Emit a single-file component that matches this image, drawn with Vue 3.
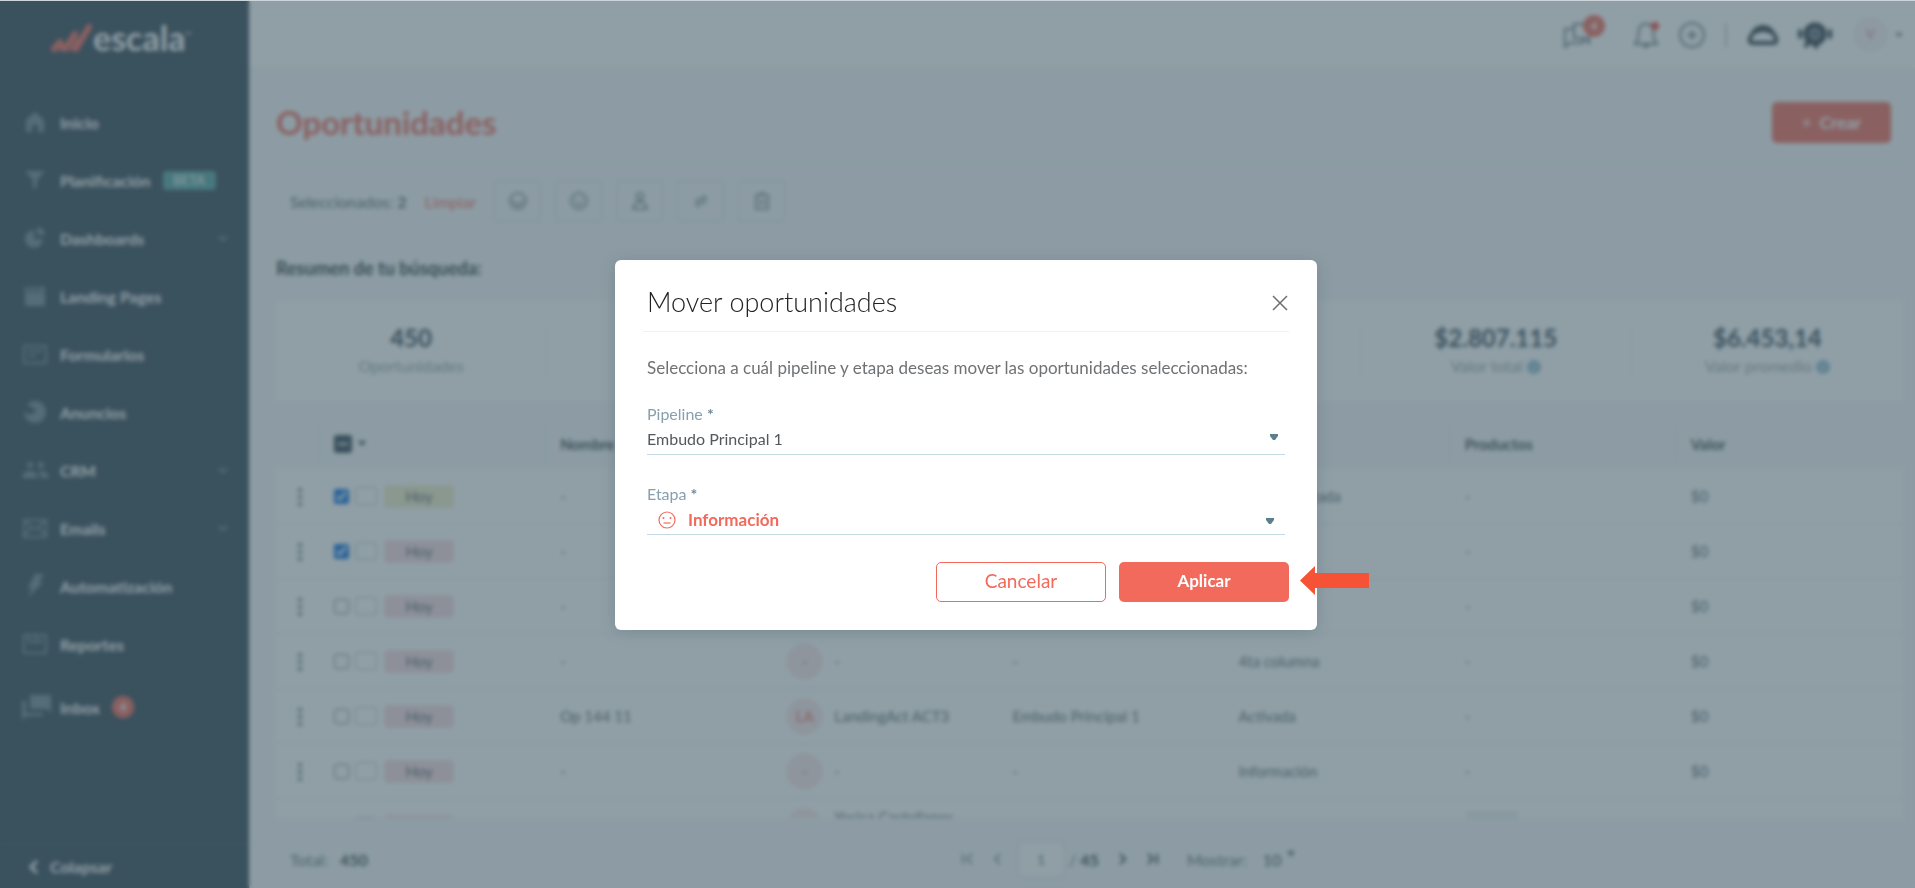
<template>
  <div class="app">
    <aside class="sidebar">
      <div class="logo">
        <svg class="logo-mark" width="42" height="30" viewBox="0 0 42 30" aria-hidden="true">
          <path d="M3 26 L9 19 M14 26 L24 11 M25 26 L38 4" stroke="#f26a5c" stroke-width="6" stroke-linecap="round" />
          <path d="M9 27 L12 22 M20 27 L27 16" stroke="#f26a5c" stroke-width="3" stroke-linecap="round" />
        </svg>
        <span class="logo-text">escala</span><span class="logo-tm">™</span>
      </div>

      <nav class="menu">
        <a v-for="item in menu" :key="item.label" href="#" class="menu-item" :class="{ 'menu-item-inbox': item.count }">
          <svg class="menu-icon" width="28" height="28" viewBox="0 0 28 28" aria-hidden="true">
            <path :d="item.icon" :class="item.solid ? 'solid' : 'line'" />
          </svg>
          <span>{{ item.label }}</span>
          <span v-if="item.beta" class="beta">BETA</span>
          <span v-if="item.count" class="count">{{ item.count }}</span>
          <svg v-if="item.children" class="chevron" width="12" height="8" viewBox="0 0 12 8" aria-hidden="true">
            <path d="M2 2 L6 6 L10 2" class="line" />
          </svg>
        </a>
      </nav>

      <button class="collapse">
        <svg width="12" height="16" viewBox="0 0 12 16" aria-hidden="true">
          <path d="M9 2 L3 8 L9 14" fill="none" stroke="currentColor" stroke-width="3" />
        </svg>
        Colapsar
      </button>
    </aside>

    <div class="main">
      <header class="topbar">
        <button class="icon-btn chat-btn" aria-label="Mensajes">
          <svg width="32" height="30" viewBox="0 0 32 30">
            <path d="M12 4 H27 V23 L23 18 H12 Z M12 9 H3 V27 L8 23 H21 V18" class="line" />
          </svg>
          <span class="count chat-count">4</span>
        </button>
        <button class="icon-btn bell-btn" aria-label="Notificaciones">
          <svg width="26" height="28" viewBox="0 0 26 28">
            <path d="M2 23 H24 L21 18 L20 8 C19 5 16 3 13 3 C10 3 7 5 6 8 L5 18 Z M10 24 Q13 28 16 24" class="line" />
            <circle cx="22" cy="5" r="4" fill="#f2453b" />
          </svg>
        </button>
        <button class="icon-btn" aria-label="Agregar">
          <svg width="26" height="26" viewBox="0 0 26 26">
            <circle cx="13" cy="13" r="12" class="line" />
            <path d="M13 8 V18 M8 13 H18" class="line" />
          </svg>
        </button>
        <span class="separator"></span>
        <button class="icon-btn academy-btn" aria-label="Academia">
          <svg width="32" height="24" viewBox="0 0 32 24">
            <path d="M6 20 C2 20 2 16 4 13 C6 11 7 4 16 4 C25 4 26 11 28 13 C30 16 30 20 26 20 Z" fill="none" stroke="#2b3a42" stroke-width="4" stroke-linejoin="round" />
            <path d="M7 10 Q16 5 25 10" fill="none" stroke="#2b3a42" stroke-width="3" />
          </svg>
        </button>
        <button class="icon-btn robot-btn" aria-label="Asistente">
          <svg width="36" height="28" viewBox="0 0 36 28">
            <circle cx="18" cy="13" r="9" fill="#7d8b92" stroke="#2b3a42" stroke-width="5" />
            <path d="M3 10 V16 M33 10 V16 M11 20 L9 25 M19 22 V26" fill="none" stroke="#2b3a42" stroke-width="4" stroke-linecap="round" />
            <rect x="14" y="11" width="8" height="4" rx="2" fill="#4d5d65" />
          </svg>
        </button>
        <button class="profile" aria-label="Perfil">
          <span class="profile-avatar">V</span>
          <svg width="8" height="6" viewBox="0 0 8 6"><path d="M0 1 H8 L4 5 Z" fill="#5d6e76" /></svg>
        </button>
      </header>

      <main class="content">
        <div class="page-head">
          <h1>Oportunidades</h1>
          <button class="create"><span class="plus">+</span> Crear</button>
        </div>

        <div class="toolbar">
          <span class="selected">Seleccionados: <b>{{ selectedCount }}</b></span>
          <a href="#" class="clear">Limpiar</a>
          <button v-for="action in actions" :key="action.label" class="action" :aria-label="action.label">
            <svg width="20" height="20" viewBox="0 0 20 20"><path :d="action.icon" class="line" /></svg>
          </button>
        </div>

        <h2>Resumen de tu búsqueda:</h2>
        <div class="stats">
          <div v-for="(stat, i) in stats" :key="i" class="stat">
            <strong>{{ stat.value }}</strong>
            <span>{{ stat.label }} <i v-if="stat.info" class="info">i</i></span>
          </div>
        </div>

        <div class="table-wrap">
          <table>
            <thead>
              <tr>
                <th class="col-dots"></th>
                <th>
                  <span class="check-all"><span class="check-mixed"></span><svg width="8" height="6" viewBox="0 0 8 6"><path d="M0 0 H8 L4 5 Z" fill="#2b3a42" /></svg></span>
                </th>
                <th>Nombre</th>
                <th>Contacto</th>
                <th>Pipeline</th>
                <th>Etapa</th>
                <th>Productos</th>
                <th>Valor</th>
              </tr>
            </thead>
            <tbody>
              <tr v-for="(row, i) in rows" :key="i">
                <td class="col-dots">
                  <svg width="6" height="20" viewBox="0 0 6 20"><path d="M1 1h4v4H1z M1 8h4v4H1z M1 15h4v4H1z" fill="#7d8b92" /></svg>
                </td>
                <td>
                  <div class="status">
                    <input type="checkbox" v-model="row.checked" :aria-label="'Seleccionar fila ' + (i + 1)">
                    <span class="note"></span>
                    <span class="tag" :class="row.tag">{{ row.date }}</span>
                  </div>
                </td>
                <td>{{ row.name }}</td>
                <td>
                  <div class="contact">
                    <span class="avatar">{{ row.initials }}</span>
                    <span class="contact-name" :class="{ tall: row.tall }">{{ row.contact }}</span>
                  </div>
                </td>
                <td>{{ row.pipeline }}</td>
                <td>{{ row.stage }}</td>
                <td><span v-if="row.tall" class="product"></span><template v-else>-</template></td>
                <td>{{ row.value }}</td>
              </tr>
            </tbody>
          </table>
        </div>

        <footer class="pager">
          <span class="total">Total: <b>450</b></span>
          <div class="pages">
            <button class="off" aria-label="Primera"><svg width="14" height="14" viewBox="0 0 14 14"><path d="M2 2 V12 M11 2 L6 7 L11 12" /></svg></button>
            <button class="off" aria-label="Anterior"><svg width="14" height="14" viewBox="0 0 14 14"><path d="M9 2 L4 7 L9 12" /></svg></button>
            <input type="text" v-model="page" aria-label="Página">
            <span class="of">/ <b>45</b></span>
            <button aria-label="Siguiente"><svg width="14" height="14" viewBox="0 0 14 14"><path d="M5 2 L10 7 L5 12" /></svg></button>
            <button aria-label="Última"><svg width="14" height="14" viewBox="0 0 14 14"><path d="M3 2 L8 7 L3 12 M12 2 V12" /></svg></button>
            <label for="mostrar">Mostrar:</label>
            <span class="size">
              <select id="mostrar" v-model="pageSize"><option>10</option><option>25</option></select>
              <svg width="8" height="8" viewBox="0 0 8 8"><path d="M0 1 H8 L4 7 Z" fill="#334654" /></svg>
            </span>
          </div>
        </footer>
      </main>
    </div>

    <div class="overlay">
      <section class="modal" role="dialog" aria-modal="true" aria-labelledby="modal-title">
        <header class="modal-head">
          <h2 id="modal-title">Mover oportunidades</h2>
          <button class="close" aria-label="Cerrar">
            <svg width="18" height="18" viewBox="0 0 18 18"><path d="M2 2 L16 16 M16 2 L2 16" fill="none" stroke="#6b6f73" stroke-width="1.5" /></svg>
          </button>
        </header>
        <div class="modal-body">
          <p>Selecciona a cuál pipeline y etapa deseas mover las oportunidades seleccionadas:</p>

          <div class="field">
            <label for="pipeline">Pipeline <b>*</b></label>
            <div class="select-box">
              <select id="pipeline" v-model="pipeline"><option>Embudo Principal 1</option></select>
              <svg class="arrow" width="8" height="6" viewBox="0 0 8 6"><path d="M0 0 H8 V2 L5 6 H3 L0 2 Z" fill="#5c7f90" /></svg>
            </div>
          </div>

          <div class="field field-stage">
            <label for="etapa">Etapa <b>*</b></label>
            <div class="select-box">
              <svg class="face" width="18" height="18" viewBox="0 0 18 18">
                <circle cx="9" cy="9" r="8" fill="none" stroke="#f26a5c" stroke-width="1.2" />
                <circle cx="5.5" cy="7" r="1" fill="#f26a5c" /><circle cx="12.5" cy="7" r="1" fill="#f26a5c" />
                <path d="M5.5 12 H12.5" stroke="#f26a5c" stroke-width="1.2" />
              </svg>
              <select id="etapa" v-model="stage"><option>Información</option></select>
              <svg class="arrow" width="8" height="6" viewBox="0 0 8 6"><path d="M0 0 H8 V2 L5 6 H3 L0 2 Z" fill="#5c7f90" /></svg>
            </div>
          </div>
        </div>
        <div class="modal-actions">
          <button class="btn btn-outline">Cancelar</button>
          <button class="btn btn-primary">Aplicar</button>
        </div>
        <svg class="pointer" width="69" height="29" viewBox="0 0 69 29" aria-hidden="true">
          <path d="M0 14.5 L15 0 V7 H69 V22 H15 V29 Z" fill="#f65236" />
        </svg>
      </section>
    </div>
  </div>
</template>

<script setup>
import { ref, computed } from 'vue';

const menu = [
  { label: 'Inicio', solid: true, icon: 'M14 4 L23 12 V24 H17 V17 H11 V24 H5 V12 Z' },
  { label: 'Planificación', beta: true, solid: true, icon: 'M4 5 H24 L16 14 V20 L12 24 V14 Z' },
  { label: 'Dashboards', children: true, solid: true, icon: 'M13 6 V15 H22 A9 9 0 1 1 13 6 Z M16 3 A8 8 0 0 1 24 11 H16 Z' },
  { label: 'Landing Pages', solid: true, icon: 'M4 5 H8 V9 H4 Z M10 5 H15 V9 H10 Z M17 5 H24 V9 H17 Z M4 10 H24 V24 H4 Z' },
  { label: 'Formularios', icon: 'M3 6 H25 V23 H3 Z M7 11 H21 M7 16 H15' },
  { label: 'Anuncios', solid: true, icon: 'M14 3 A11 11 0 1 1 3 14 L9 17 L16 12 L6 7 A11 11 0 0 1 14 3 Z' },
  { label: 'CRM', children: true, solid: true, icon: 'M9 6 A3 3 0 1 1 9 12 A3 3 0 1 1 9 6 Z M20 6 A3 3 0 1 1 20 12 A3 3 0 1 1 20 6 Z M1 22 Q2 15 9 15 Q16 15 17 22 Z M19 15 Q27 15 28 22 H20 Q20 18 17 16 Z' },
  { label: 'Emails', children: true, icon: 'M3 6 H25 V23 H3 Z M4 7 L14 16 L24 7 M3 22 L10 14 M25 22 L18 14' },
  { label: 'Automatización', solid: true, icon: 'M14 2 H23 L18 10 H22 L7 26 L11 16 H7 Z' },
  { label: 'Reportes', icon: 'M3 5 H25 V23 H3 Z M8 6 V12 H20 V8 M15 6 V12' },
  { label: 'Inbox', count: 4, solid: true, icon: 'M9 2 H30 V20 L26 16 H9 Z M1 8 H5 V20 H22 L22 23 H6 L1 27 Z' },
];

const actions = [
  { label: 'Cambiar estado', icon: 'M10 2 A8 8 0 1 1 10 18 A8 8 0 1 1 10 2 Z M4 11 H7 L8 14 H12 L13 11 H16' },
  { label: 'Mover etapa', icon: 'M10 2 A8 8 0 1 1 10 18 A8 8 0 1 1 10 2 Z M7 7 V9 M13 7 V9 M6 12 Q10 15 14 12' },
  { label: 'Asignar responsable', icon: 'M10 2 A3 3 0 1 1 10 9 A3 3 0 1 1 10 2 Z M3 18 Q4 13 10 10 Q16 13 17 18 Z' },
  { label: 'Transferir', icon: 'M5 8 H15 L12 4 M15 12 H5 L8 16' },
  { label: 'Eliminar', icon: 'M3 4 H17 M8 2 H12 M4 4 V18 H16 V4 M8 8 V14 M12 8 V14' },
];

const stats = [
  { value: '450', label: 'Oportunidades' },
  {},
  {},
  {},
  { value: '$2.807.115', label: 'Valor total', info: true },
  { value: '$6.453,14', label: 'Valor promedio', info: true },
];

const emptyRow = { checked: false, tag: 'red', date: 'Hoy', name: '-', initials: '-', contact: '-', pipeline: '-', stage: '-', value: '$0' };

const rows = ref([
  { ...emptyRow, checked: true, tag: 'yellow', stage: 'Etapa finalizada' },
  { ...emptyRow, checked: true },
  { ...emptyRow },
  { ...emptyRow, stage: '4ta columna' },
  { ...emptyRow, name: 'Op 144 11', initials: 'LA', contact: 'LandingAct ACT3', pipeline: 'Embudo Principal 1', stage: 'Activada' },
  { ...emptyRow, stage: 'Información' },
  { checked: false, tag: 'red', contact: 'Yesica Castellanos', tall: true },
]);

const selectedCount = computed(() => rows.value.filter((r) => r.checked).length);

const page = ref('1');
const pageSize = ref('10');
const pipeline = ref('Embudo Principal 1');
const stage = ref('Información');
</script>

<style>
body { margin: 0; overflow: hidden; }
</style>

<style scoped>
.app {
  --coral: #f26a5c;
  --navy: #334654;
  --text: #5b686f;
  --line: #eff2f3;
  display: flex;
  height: 100vh;
  font-family: Lato, "Open Sans", sans-serif;
  font-size: 14px;
  color: var(--text);
  background: #f7f8f9;
}
* { box-sizing: border-box; }
button, input, select { font-family: inherit; }
button { border: none; background: none; padding: 0; cursor: pointer; }
a { text-decoration: none; }
.line { fill: none; stroke: currentColor; stroke-width: 2; }
.solid { fill: currentColor; }

/* Sidebar */
.sidebar { width: 249px; flex-shrink: 0; display: flex; flex-direction: column; background: var(--navy); color: #fff; }
.logo { display: flex; align-items: center; height: 76px; padding-left: 51px; }
.logo-text { font-size: 34px; font-weight: 700; line-height: 32px; }
.logo-tm { font-size: 8px; align-self: flex-start; padding-top: 30px; }
.menu { flex: 1; padding-top: 17px; }
.menu-item { display: flex; align-items: center; height: 58px; padding: 0 20px 0 21px; color: #fff; font-size: 16px; font-weight: 700; }
.menu-item-inbox { height: 68px; }
.menu-icon { margin-right: 11px; color: #728893; overflow: visible; }
.chevron { margin-left: auto; color: #728893; }
.beta { margin-left: 12px; width: 53px; line-height: 19px; border-radius: 4px; background: #54a3a0; text-align: center; font-size: 13px; font-weight: 400; }
.count { display: inline-block; width: 22px; line-height: 22px; border-radius: 50%; background: var(--coral); color: #fff; font-size: 12px; font-weight: 700; text-align: center; }
.menu-item .count { margin-left: 12px; }
.collapse { display: flex; align-items: center; gap: 10px; height: 44px; padding-left: 28px; border-top: 1px solid #42586a; color: #fff; font-size: 16px; font-weight: 700; }

/* Topbar */
.main { flex: 1; min-width: 0; display: flex; flex-direction: column; }
.topbar { display: flex; align-items: center; justify-content: flex-end; height: 70px; flex-shrink: 0; padding-right: 12px; background: #fff; border-bottom: 1px solid #e4e9eb; }
.icon-btn { display: flex; position: relative; color: #6a7a82; }
.chat-btn { margin-right: 39px; }
.chat-count { position: absolute; left: 21px; top: -5px; }
.bell-btn { margin-right: 20px; }
.separator { width: 2px; height: 24px; margin: 0 20px; background: #c0c9cd; }
.academy-btn { margin-right: 18px; }
.robot-btn { margin-right: 19px; }
.profile { display: flex; align-items: center; gap: 6px; }
.profile-avatar { width: 37px; line-height: 37px; border-radius: 50%; background: #f9f3f5; color: #e8a2b0; font-weight: 700; }

/* Content */
.content { flex: 1; min-height: 0; display: flex; flex-direction: column; padding: 0 12px 0 27px; }
.page-head { display: flex; align-items: center; justify-content: space-between; height: 93px; flex-shrink: 0; padding: 12px 12px 0 0; border-bottom: 1px solid var(--line); }
h1 { margin: 0; font-size: 33px; color: var(--coral); }
.create { width: 119px; height: 41px; border-radius: 5px; background: var(--coral); color: #fff; font-size: 17px; font-weight: 700; }
.plus { margin-right: 4px; font-weight: 400; }
.toolbar { display: flex; align-items: center; height: 76px; flex-shrink: 0; gap: 14px; padding-left: 14px; }
.selected, .clear { font-size: 16px; }
.clear { color: var(--coral); margin: 0 4px; }
.action { display: flex; align-items: center; justify-content: center; width: 47px; height: 42px; border: 1px solid #d3dae6; border-radius: 4px; color: #84939a; }
.content > h2 { margin: 0; height: 62px; line-height: 58px; flex-shrink: 0; font-size: 18px; color: #2d383e; }
.stats { display: grid; grid-template-columns: repeat(6, 1fr); height: 100px; flex-shrink: 0; align-items: center; background: #fff; border-radius: 4px; }
.stat { display: flex; flex-direction: column; align-items: center; gap: 4px; height: 52px; border-right: 1px solid var(--line); }
.stat:last-child { border-right: none; }
.stat strong { font-size: 24px; line-height: 26px; color: var(--navy); }
.stat span { font-size: 16px; line-height: 22px; color: #9aa5aa; }
.info { display: inline-block; width: 14px; line-height: 14px; border-radius: 50%; background: #8fbad4; color: #fff; font-size: 10px; text-align: center; vertical-align: 1px; }

/* Table */
.table-wrap { flex: 1; min-height: 0; margin-top: 18px; overflow: hidden; background: #fff; border-radius: 4px; }
table { width: 100%; border-collapse: separate; border-spacing: 0; table-layout: fixed; }
th, td { padding: 0 14px; text-align: left; font-size: 15px; }
th { height: 50px; background: #f7f8f9 linear-gradient(#e4e9eb, #e4e9eb) no-repeat right center; background-size: 1px 38px; color: #3c484e; }
th:last-child { background-image: none; }
td { height: 55px; border-bottom: 1px solid #e6eaec; }
.col-dots { width: 44px; padding: 0 0 0 4px; text-align: center; }
.col-dots svg { vertical-align: middle; }
.check-all { display: flex; align-items: center; gap: 6px; }
.check-mixed { display: flex; align-items: center; justify-content: center; width: 18px; height: 18px; border-radius: 3px; background: var(--navy); }
.check-mixed::before { content: ""; width: 10px; height: 2px; background: #fff; }
.status { display: flex; align-items: center; }
.status input { width: 15px; height: 15px; margin: 0; accent-color: #0a6fe0; }
.note { width: 22px; height: 18px; margin: 0 7px 0 6px; border: 1px solid #b9c3c8; border-radius: 3px; }
.tag { width: 70px; height: 23px; line-height: 23px; border-radius: 4px; text-align: center; }
.tag.red { background: #f8dce0; }
.tag.yellow { background: #f1eec9; }
.contact { display: flex; align-items: center; gap: 11px; }
.avatar { width: 37px; height: 37px; line-height: 37px; flex-shrink: 0; border-radius: 50%; background: #fae7e9; color: var(--coral); text-align: center; }
.contact-name.tall { padding-bottom: 18px; white-space: nowrap; }
.product { display: block; width: 54px; height: 30px; border-radius: 4px; background: #eef0f1; }

/* Pager */
.pager { display: flex; align-items: center; height: 70px; flex-shrink: 0; padding: 12px 0 0 14px; font-size: 16px; color: #5d6e76; }
.total { flex: 1; }
.total b, .of b { color: #3c484e; }
.total b { margin-left: 8px; }
.pages { flex: 2; display: flex; align-items: center; gap: 16px; padding-left: 200px; }
.pages button { display: flex; color: #2b3a42; }
.pages button.off { color: #84949b; }
.pages path { fill: none; stroke: currentColor; stroke-width: 2; }
.pages input { width: 48px; height: 38px; border: 1px solid #ccd4e4; border-radius: 6px; background: #fff; text-align: center; font-size: 14px; color: #5d6e76; margin: 0 -12px 0 -4px; }
.pages label { margin-left: 12px; }
.size { display: flex; align-items: flex-start; }
.size select { appearance: none; border: none; background: none; padding: 0; width: 24px; font-size: 16px; color: var(--navy); }
.size path { stroke: none; fill: currentColor; }

/* Modal */
.overlay { position: fixed; inset: 0; display: flex; align-items: center; justify-content: center; padding-left: 17px; border-top: 1px solid #ccd5d9; background: rgba(63, 89, 101, 0.58); backdrop-filter: blur(2px); }
.modal { position: relative; width: 702px; padding: 28px; border-radius: 6px; background: #fff; box-shadow: 0 2px 16px rgba(40, 60, 70, 0.2); }
.modal-head { display: flex; align-items: flex-start; justify-content: space-between; height: 44px; padding: 0 0 0 4px; border-bottom: 1px solid #f0f1f3; }
.modal-head h2 { margin: 0; font-size: 27px; font-weight: 300; line-height: 28px; color: #222; }
.close { display: flex; padding-top: 6px; }
.modal-body { padding: 24px 4px 0; }
.modal-body p { margin: 0 0 22px; font-size: 17px; line-height: 24px; color: #6f7275; }
.field { display: flex; flex-direction: column; height: 53px; margin-bottom: 27px; }
.field label { font-size: 16px; line-height: 24px; color: #87a0ae; }
.field label b { color: #6f8b9a; }
.select-box { position: relative; display: flex; align-items: center; flex: 1; padding-bottom: 2px; border-bottom: 1px solid #c3d9e4; }
.select-box select { flex: 1; appearance: none; border: none; outline: none; background: none; padding: 0; font-size: 16px; color: #54585b; }
.select-box .arrow { position: absolute; right: 7px; top: 8px; pointer-events: none; }
.face { margin: 0 12px 0 11px; }
.field-stage .select-box { padding-bottom: 0; }
.field-stage .select-box select { color: var(--coral); font-size: 17px; font-weight: 700; }
.field-stage .arrow { right: 11px; top: 12px; }
.modal-actions { display: flex; justify-content: flex-end; gap: 13px; }
.btn { width: 170px; height: 40px; padding-bottom: 2px; border-radius: 5px; }
.btn-outline { border: 1px solid var(--coral); color: var(--coral); font-size: 19px; }
.btn-primary { background: var(--coral); color: #fff; font-size: 17px; font-weight: 700; }
.pointer { position: absolute; right: -52px; bottom: 35px; }
</style>
